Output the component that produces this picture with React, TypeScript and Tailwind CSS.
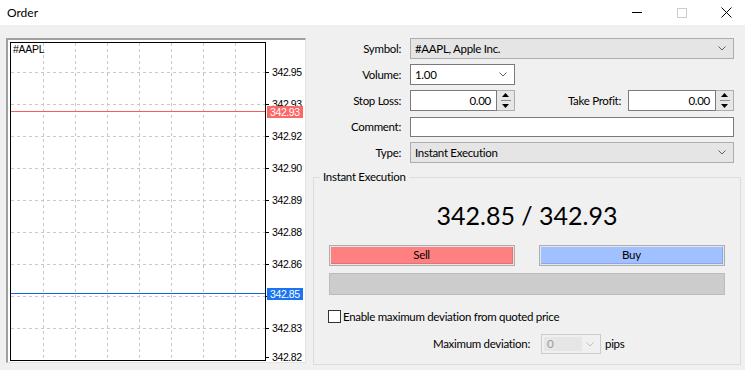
import React from 'react';

const ui = "font-['Lato','Liberation_Sans',sans-serif] text-[11.5px] tracking-[-0.3px] text-black";

const Chevron = ({ color = '#5f5f5f' }: { color?: string }) => (
  <svg width="8" height="5" viewBox="0 0 8 5">
    <polyline points="0.5,0.5 4,4 7.5,0.5" fill="none" stroke={color} strokeWidth="1" />
  </svg>
);

const Combo = ({ value, className }: { value: string; className: string }) => (
  <div className={`flex items-center h-[21px] pl-[4px] pr-[7px] ${className}`}>
    <span className="flex-1">{value}</span>
    <Chevron />
  </div>
);

const SpinInput = ({ value, className }: { value: string; className: string }) => (
  <div className={`flex h-[21px] ${className}`}>
    <div className="flex-1 bg-white border border-[#7a7a7a] text-right pr-[5px] leading-[19px]">{value}</div>
    <div className="w-[18px] border border-l-0 border-[#adadad] bg-[#e6e6e6] flex flex-col items-center justify-center gap-[3px]">
      <svg width="7" height="4" viewBox="0 0 7 4"><polygon points="3.5,0 7,4 0,4" fill="#000" /></svg>
      <div className="w-[10px] h-px bg-[#8a8a8a]" />
      <svg width="7" height="4" viewBox="0 0 7 4"><polygon points="0,0 7,0 3.5,4" fill="#000" /></svg>
    </div>
  </div>
);

const gridX = [35, 67, 99, 131, 163, 195, 227];
const gridY = [32, 64, 96, 128, 160, 192, 224, 256, 288];
const levels: [string, number][] = [
  ['342.95', 32], ['342.93', 64], ['342.92', 96], ['342.90', 128], ['342.89', 160],
  ['342.88', 192], ['342.86', 224], ['342.85', 256], ['342.83', 288], ['342.82', 317],
];

const Chart = () => (
  <div className="ml-[6px] w-[300px] h-[325px] border-t-2 border-l-2 border-[#a0a0a0] border-r border-b border-r-[#e3e3e3] border-b-[#e3e3e3] bg-white">
    <svg width="297" height="322" viewBox="0 0 297 322" className="block">
      {gridX.map((x) => (
        <line key={x} x1={x + 0.5} y1={3} x2={x + 0.5} y2={320} stroke="#c8c8c8" strokeDasharray="3 3" />
      ))}
      {gridY.map((y) => (
        <line key={y} x1={3} y1={y + 0.5} x2={257} y2={y + 0.5} stroke="#c8c8c8" strokeDasharray="3 3" />
      ))}
      <rect x={2.5} y={2.5} width={255} height={318} fill="none" stroke="#000" />
      {levels.map(([t, y]) => (
        <g key={t}>
          <line x1={258} y1={y + 0.5} x2={261} y2={y + 0.5} stroke="#000" />
          <text x={264} y={y + 4} fontSize="10.5" letterSpacing="-0.4" fontFamily="Liberation Sans, Arial, sans-serif" fill="#000">{t}</text>
        </g>
      ))}
      <line x1={3} y1={71.5} x2={257} y2={71.5} stroke="#f06060" />
      <rect x={259} y={66} width={36} height={12} fill="#ff6666" />
      <text x={262} y={76} fontSize="10.5" letterSpacing="-0.4" fontFamily="Liberation Sans, Arial, sans-serif" fill="#fff">342.93</text>
      <line x1={3} y1={253.5} x2={257} y2={253.5} stroke="#1464e6" />
      <rect x={259} y={248} width={36} height={12} fill="#1a73f0" />
      <text x={262} y={258} fontSize="10.5" letterSpacing="-0.4" fontFamily="Liberation Sans, Arial, sans-serif" fill="#fff">342.85</text>
      <text x={5} y={13} fontSize="10.5" fontFamily="Liberation Sans, Arial, sans-serif" fill="#000">#AAPL</text>
    </svg>
  </div>
);

const Row = ({ label, children }: { label: string; children: React.ReactNode }) => (
  <div className="flex items-center h-[21px]">
    <span className="w-[89px] text-right pr-[1px]">{label}</span>
    <div className="ml-[8px] flex-1 flex items-center">{children}</div>
  </div>
);

export default function App() {
  return (
    <div className={`w-[745px] h-[370px] bg-[#f0f0f0] overflow-hidden ${ui}`}>
      <div className="h-[25px] bg-white flex items-center pl-[7px]">
        <span className="text-[12px] tracking-normal">Order</span>
        <div className="ml-auto mr-[-4px] flex h-full">
          <div className="w-[45px] flex items-center justify-center">
            <div className="w-[10px] h-px bg-black" />
          </div>
          <div className="w-[45px] flex items-center justify-center">
            <div className="w-[10px] h-[10px] border border-[#cccccc]" />
          </div>
          <div className="w-[45px] flex items-center justify-center">
            <svg width="11" height="11" viewBox="0 0 11 11">
              <path d="M0.5 0.5 L10.5 10.5 M10.5 0.5 L0.5 10.5" stroke="#000" strokeWidth="1" />
            </svg>
          </div>
        </div>
      </div>

      <div className="flex pt-[13px]">
        <Chart />

        <div className="ml-[7px] w-[428px]">
          <div className="w-[421px] flex flex-col gap-[5px]">
            <Row label="Symbol:">
              <Combo value="#AAPL, Apple Inc." className="w-full bg-[#e5e5e5] border border-[#adadad]" />
            </Row>
            <Row label="Volume:">
              <Combo value="1.00" className="w-[105px] bg-white border border-[#7a7a7a]" />
            </Row>
            <Row label="Stop Loss:">
              <SpinInput value="0.00" className="w-[105px]" />
              <span className="flex-1 text-right pr-[7px]">Take Profit:</span>
              <SpinInput value="0.00" className="w-[106px]" />
            </Row>
            <Row label="Comment:">
              <div className="w-full h-[20px] bg-white border border-[#7a7a7a]" />
            </Row>
            <Row label="Type:">
              <Combo value="Instant Execution" className="w-full bg-[#e5e5e5] border border-[#adadad]" />
            </Row>
          </div>

          <div className="relative mt-[14px] h-[188px] border border-[#dcdcdc] px-[15px]">
            <span className="absolute top-[-9px] left-[6px] px-[3px] bg-[#f0f0f0] leading-[16px]">Instant Execution</span>
            <div className="mt-[22px] h-[30px] leading-[30px] text-center text-[25px] tracking-normal">342.85 / 342.93</div>
            <div className="mt-[15px] flex gap-[24px]">
              <div className="w-[186px] h-[21px] border border-[#adadad] p-px bg-[#e6e6e6]">
                <div className="h-full bg-[#ff8080] border-b border-r border-[#e66f6f] flex items-center justify-center">Sell</div>
              </div>
              <div className="w-[186px] h-[21px] border border-[#adadad] p-px bg-[#e6e6e6]">
                <div className="h-full bg-[#a0c0ff] border-b border-r border-[#88a8ee] flex items-center justify-center">Buy</div>
              </div>
            </div>
            <div className="mt-[7px] w-[396px] h-[22px] bg-[#cccccc] border border-[#bcbcbc]" />
            <div className="mt-[15px] ml-[-1px] flex items-center h-[13px] gap-[2px]">
              <div className="w-[13px] h-[13px] border border-[#333333] bg-white" />
              <span>Enable maximum deviation from quoted price</span>
            </div>
            <div className="mt-[11px] flex items-center h-[20px]">
              <span className="w-[201px] text-right">Maximum deviation:</span>
              <div className="ml-[11px] w-[60px] h-[20px] border border-[#cccccc] flex items-center p-[2px]">
                <div className="w-[38px] h-full bg-[#e6e6e6] text-[#9a9a9a] pl-[3px] leading-[14px]">0</div>
                <div className="flex-1 flex justify-center">
                  <Chevron color="#bdbdbd" />
                </div>
              </div>
              <span className="ml-[4px]">pips</span>
            </div>
          </div>
        </div>
      </div>
    </div>
  );
}
